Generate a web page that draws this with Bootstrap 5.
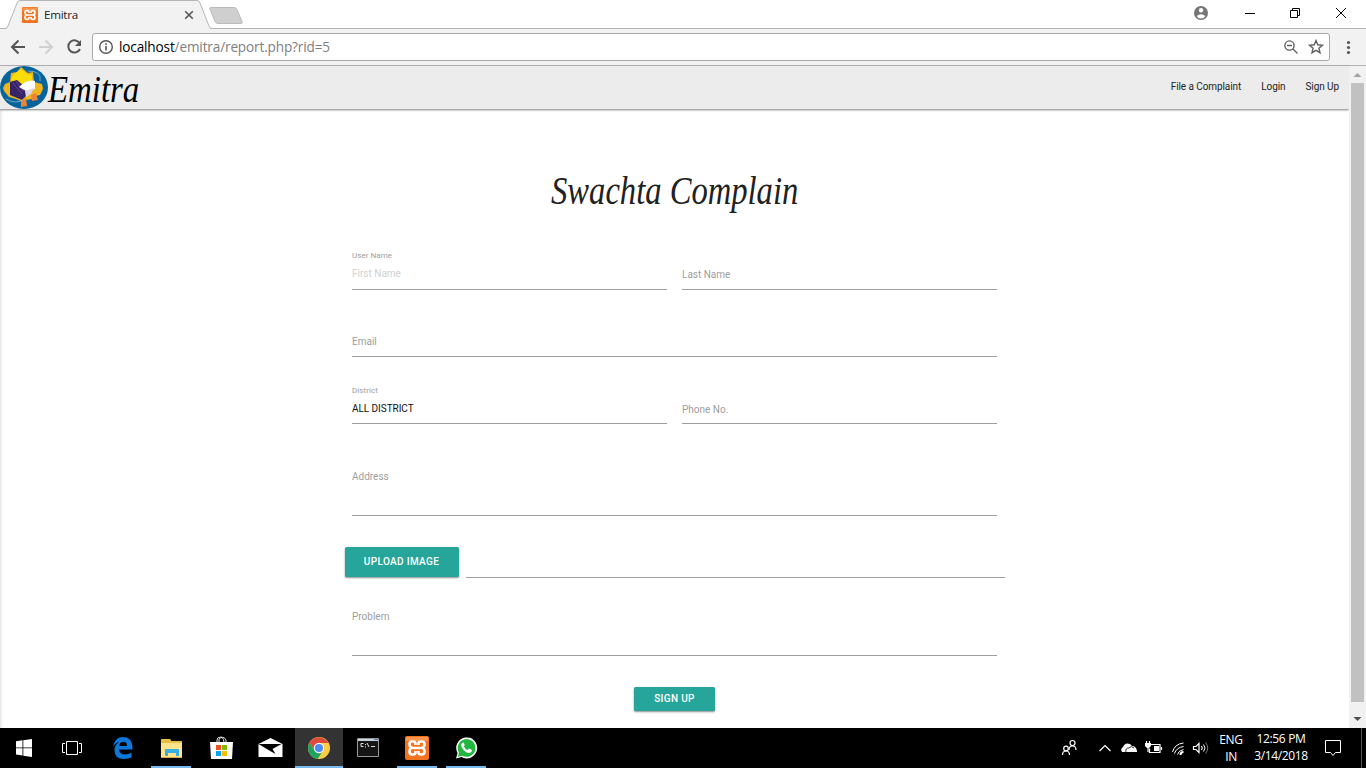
<!DOCTYPE html>
<html lang="en">
<head>
<meta charset="utf-8">
<meta name="viewport" content="width=device-width, initial-scale=1">
<title>Emitra</title>
<link href="https://cdn.jsdelivr.net/npm/bootstrap@5.3.0/dist/css/bootstrap.min.css" rel="stylesheet">
<style>
body{height:768px;overflow:hidden;font-family:Roboto,"Liberation Sans",sans-serif;background:#fff;color:#212121}
svg{display:block;flex:none}
.ui{font-family:"Open Sans","Noto Sans",sans-serif}
.tabstrip{height:28px;background:#fff}
.tab-face{width:212px;height:29px;z-index:2}
.tab-title{font-size:11.6px;line-height:16px;color:#222;letter-spacing:-.25px}
.toolbar{height:38px;background:#f2f2f2;border-top:1px solid #b5b5b5;border-bottom:1px solid #b5b5b5}
.omnibox{height:28px;width:1238px;border:1px solid #a9a9a9;border-radius:3px;background:#fff;font-size:13.6px;letter-spacing:-.15px;line-height:26px;color:#808080}
.viewport-area{height:662px}
.site{width:1349px;box-shadow:inset 3px 0 3px -2px #ddd}
.site-nav{height:43px;background:#ececec;box-shadow:0 1px 2px rgba(0,0,0,.5);font-size:10px;color:#222}
.script-face{font-family:"Liberation Serif",serif;font-style:italic;white-space:nowrap}
.brand-name{font-size:38px;line-height:46px;color:#000;width:92px;transform:scaleX(.865);transform-origin:left}
.nav-links{gap:20px;padding-right:10px;line-height:14px;padding-top:14px;letter-spacing:-.08px}
.headline{height:114px;padding-top:58px;font-size:40px;line-height:48px;color:#212121;font-weight:400}
.headline span{display:inline-block;transform:scaleX(.815)}
.complaint{width:660px;margin:0 auto;font-size:10px;color:#9e9e9e}
.complaint .row{--bs-gutter-x:15px;margin:0}
.field{height:67px;border-bottom:1px solid #9e9e9e;line-height:14px;padding-top:45px;letter-spacing:0}
.field.stacked{padding-top:26px}
.tiny{font-size:8px;line-height:14px;letter-spacing:.05px}
.entry{margin-top:4px}
.ghost{color:#d1d1d1}
.chosen{color:#111;letter-spacing:-.05px}
.field.lower{padding-top:46px}
.field.stacked.lower{padding-top:27px}
.tall{height:92px}
.field.problem{height:78px;padding-top:32px}
.upload{height:62px}
.btn-teal{--bs-btn-bg:#26a69a;--bs-btn-color:#fff;--bs-btn-hover-bg:#2bbbad;--bs-btn-hover-color:#fff;border:0;border-radius:1.5px;padding:0 0 1px;font-size:10px;font-weight:500;letter-spacing:.35px;box-shadow:0 1px 2px rgba(0,0,0,.45)}
.btn-upload{width:114px;height:30px;margin-bottom:1px}
.upload-line{border-bottom:1px solid #9e9e9e;margin-left:7px}
.btn-send{width:81px;height:24px;margin-top:31px}
.scroller{width:17px;background:#f1f1f1}
.thumb{width:13px;height:619px;background:#c1c1c1}
.arrow{height:17px}
.taskbar{height:40px;background:#000;color:#fff}
.task{width:48px;height:40px;margin-right:1.15px}
.task.running{background:linear-gradient(#76b9ed,#76b9ed) center bottom/40px 2px no-repeat}
.task.current{background:linear-gradient(#76b9ed,#76b9ed) center bottom/48px 2px no-repeat,#333}
.tray{font-size:12px;line-height:17px;letter-spacing:-.35px}
</style>
</head>
<body class="d-flex flex-column">
<svg width="0" height="0" class="position-absolute"><defs>
<g id="xampp"><rect width="24" height="24" rx="2" fill="#f3731e"/><path d="M1 1h22v4H1z" fill="#f9954c"/><path d="M10.500 9V7.500Q10.500 5.500 8 5.500H7Q4.500 5.500 4.500 8.200T7 11.800Q4.500 12.500 4.500 15.500T7 18.500H8Q10.500 18.500 10.500 16.500V15M13.500 9V7.500Q13.500 5.500 16 5.500H17Q19.500 5.500 19.500 8.200T17 11.800Q19.500 12.500 19.500 15.500T17 18.500H16Q13.500 18.500 13.500 16.500V15M8.500 12h7" fill="none" stroke="#fff" stroke-width="2.600"/></g>
</defs></svg>

<header class="ui">
  <div class="tabstrip d-flex">
    <div class="tab-face position-relative d-flex">
      <svg class="position-absolute top-0 start-0" width="244" height="29"><path d="M0 28.5H5.500Q7 28.500 8 26L17 3Q18 .5 20 .5H197Q199 .5 200 3L209 26Q210 28.500 212 28.500" fill="#f2f2f2" stroke="#b5b5b5"/><path d="M7 28.500H210" stroke="#f2f2f2"/><path d="M211 7.500H234Q236 7.500 237 9.500L242 21.500Q243 23.500 241 23.500H218Q216 23.500 215 21.500L210 9.500Q209 7.500 211 7.500Z" fill="#cfcfcf" stroke="#bbb"/></svg>
      <div class="position-relative d-flex align-items-start w-100">
        <svg width="16" height="16" viewBox="0 0 24 24" style="margin:7px 6px 0 22px"><use href="#xampp"/></svg>
        <span class="tab-title" style="margin-top:7px">Emitra</span>
        <svg width="10" height="10" style="margin:10px 18px 0 auto"><path d="M1.200 1.200l7.600 7.600M8.800 1.200L1.200 8.800" stroke="#555" stroke-width="1.600"/></svg>
      </div>
    </div>
    <div class="ms-auto d-flex align-items-start">
      <svg width="172" height="28" viewBox="1194 0 172 28" fill="none"><circle cx="1201" cy="13" r="7" fill="#757575"/><circle cx="1201" cy="10.200" r="2.200" fill="#fff"/><path d="M1196.600 16q4.400-3.700 8.800 0-1.500 2.600-4.400 2.600t-4.400-2.600" fill="#fff"/><path d="M1245 13.500h10M1290.500 10.500h7v7h-7zM1292.500 10.500v-2h7v7h-2M1336 8l10 10M1346 8l-10 10" stroke="#000"/></svg>
    </div>
  </div>
  <div class="toolbar d-flex align-items-center">
    <svg width="92" height="36" viewBox="0 29 92 36" fill="none" stroke="#555" stroke-width="2"><path d="M25 47H12.500M18.500 40.500L12 47l6.500 6.500"/><path d="M39 47h12.500M45.500 40.500L52 47l-6.500 6.500" stroke="#d0d0d0"/><path d="M79.800 43.500A6.100 6.100 0 1 0 80 49"/><path d="M81 40v6h-6z" fill="#555" stroke="none"/></svg>
    <div class="omnibox d-flex align-items-center">
      <svg width="14" height="14" class="flex-shrink-0" style="margin:0 6px" fill="none" stroke="#555"><circle cx="7" cy="7" r="6.300" stroke-width="1.400"/><path d="M7 6v4.500M7 3.300v1.600" stroke-width="1.600"/></svg>
      <span><span class="text-black">localhost</span>/emitra/report.php?rid=5</span>
      <svg class="ms-auto" width="46" height="26" viewBox="1283 34 46 26" fill="none" stroke="#606060" stroke-width="1.400"><circle cx="1289.500" cy="45.500" r="4.600"/><path d="M1287 45.500h5M1293 49l4.500 4.500"/><path d="M1316 40.500l1.800 4.300 4.600.4-3.500 3 1.100 4.500-4-2.400-4 2.400 1.100-4.500-3.500-3 4.600-.4z"/></svg>
    </div>
    <svg width="36" height="36" fill="#555"><circle cx="18.500" cy="13.500" r="1.600"/><circle cx="18.500" cy="18.500" r="1.600"/><circle cx="18.500" cy="23.500" r="1.600"/></svg>
  </div>
</header>

<main class="viewport-area d-flex">
  <div class="site">
    <nav class="site-nav d-flex">
      <svg width="48" height="43" viewBox="0 0 48 43"><ellipse cx="24" cy="21.500" rx="24" ry="21.500" fill="#07639b"/><path d="M3 22l2-4 5-2 1-9 6-1 4-5 7 6 5-1 1 10 8 2 1 5-3 6-5 1-3 3-6 1-3 2-7-3-7-2-5-6z" fill="#efb51c"/><path d="M13 9l8-6 6 5 5 1v7l-7 5-14-7z" fill="#fadd08"/><path d="M21 34l5-2 1 8-6 1zM31 29l5-2 2 7-6 1z" fill="#ee8433"/><path d="M10 16l7-2 7 6 3 9-5 5-12-5z" fill="#352466"/><path d="M13 17l9 11M16 15l7 10" stroke="#694785"/><path d="M19 21q8-8 16-6v8l-9 2z" fill="#fff"/><path d="M25 25l9-3-3 6-5 3z" fill="#ddd7e9"/><path d="M28 5q14 0 12 10M6 33q10 6 18 0" fill="none" stroke="#9cc4dc" stroke-width=".7"/></svg>
      <div class="brand-name script-face">Emitra</div>
      <div class="nav-links d-flex ms-auto"><span>File a Complaint</span><span>Login</span><span>Sign Up</span></div>
    </nav>
    <h1 class="headline script-face text-center m-0"><span>Swachta Complain</span></h1>
    <form class="complaint">
      <div class="row">
        <div class="col-6"><div class="field stacked"><div class="tiny">User Name</div><div class="entry ghost">First Name</div></div></div>
        <div class="col-6"><div class="field">Last Name</div></div>
      </div>
      <div class="row"><div class="col-12"><div class="field">Email</div></div></div>
      <div class="row">
        <div class="col-6"><div class="field stacked lower"><div class="tiny">District</div><div class="entry chosen">ALL DISTRICT</div></div></div>
        <div class="col-6"><div class="field lower">Phone No.</div></div>
      </div>
      <div class="row"><div class="col-12"><div class="field tall lower">Address</div></div></div>
      <div class="upload d-flex align-items-end"><button type="button" class="btn btn-teal btn-upload">UPLOAD IMAGE</button><div class="upload-line flex-grow-1"></div></div>
      <div class="row"><div class="col-12"><div class="field problem">Problem</div></div></div>
      <div class="d-flex justify-content-center"><button type="button" class="btn btn-teal btn-send">SIGN UP</button></div>
    </form>
  </div>
  <div class="scroller d-flex flex-column align-items-center">
    <svg class="arrow" width="17"><path d="M4.500 11h8L8.500 7z" fill="#a3a3a3"/></svg>
    <div class="thumb"></div>
    <svg class="arrow mt-auto" width="17"><path d="M4.500 6h8L8.500 10z" fill="#505050"/></svg>
  </div>
</main>

<footer class="taskbar ui d-flex">
  <div class="task"><svg width="48" height="40" fill="#fff"><path d="M16 13.300l6.500-1v7.200H16zM23.300 12.200L32 11v8.500h-8.700zM16 20.300h6.500v7.200l-6.500-1zM23.300 20.300H32V29l-8.700-1.300z"/></svg></div>
  <div class="task"><svg width="48" height="40" fill="none" stroke="#fff"><path d="M17.500 13.500h11v13h-11zM16 15.500h-2.500v9H16M30 15.500h2.500v9H30"/></svg></div>
  <div class="task"><svg width="48" height="40" viewBox="98.500 728 48 40"><path d="M113.500 746.800Q115.500 737 123.500 737q9.800 0 9.500 12.500h-13.500q.6 5 6 5 3.700 0 6.500-2v4.800q-3 1.600-7.600 1.600-9.400 0-9.400-9 0-5 4.500-8-3.500.6-6 4.900m6.300-.8h7.700q0-4.300-3.700-4.300-3.400 0-4 4.300" fill="#0b78dc"/></svg></div>
  <div class="task running"><svg width="48" height="40" viewBox="147 728 48 40"><path d="M161 739h9l1 2h11v16h-21z" fill="#ffe28c"/><path d="M161 739h9l1 2h11v2h-21z" fill="#e9bd43"/><path d="M165 756v-7h14v7h-3v-3h-8v3z" fill="#36b0e4"/><path d="M161 757v1h21v-1z" fill="#d9ad45"/></svg></div>
  <div class="task"><svg width="48" height="40" viewBox="196 728 48 40"><path d="M216 743v-3q0-3 4-3t5 3v3M218 743v-4q4-4 5 3" fill="none" stroke="#ddd"/><path d="M209 742h23l-1 17h-21z" fill="#fff"/><path d="M215 745h5v5h-5z" fill="#f25022"/><path d="M221 745h5v5h-5z" fill="#7fba00"/><path d="M215 751h5v5h-5z" fill="#00a4ef"/><path d="M221 751h5v5h-5z" fill="#ffb900"/></svg></div>
  <div class="task"><svg width="48" height="40" viewBox="245.500 728 48 40"><path d="M258 744l12-6 12 6v13h-24z" fill="#fff"/><path d="M258 744h23l-9 5 3 5-7-4z" fill="#000"/></svg></div>
  <div class="task current"><svg width="48" height="40" viewBox="295 728 48 40"><circle cx="319" cy="748" r="11" fill="#ffcd41"/><path d="M309.500 742.500A11 11 0 0 0 317.500 758.900L323.300 750.500H314.700z" fill="#1da462"/><path d="M319 743h9.500a11 11 0 0 0-19-.5l5.200 8z" fill="#de4b3e"/><circle cx="319" cy="748" r="5.200" fill="#fff"/><circle cx="319" cy="748" r="4.100" fill="#4c8bf5"/></svg></div>
  <div class="task"><svg width="48" height="40" viewBox="343 728 48 40"><path d="M356.500 738.500h21v18h-21z" fill="#151515" stroke="#999"/><path d="M357 739h20v2h-20z" fill="#cbd4df"/><path d="M373 739.500h4" stroke="#557bb0"/><path d="M362.500 743.500h-2.500v3h2.500M364.500 744v1m0 1.500v1M366 743l2 4M370 746.500h4" fill="none" stroke="#ddd"/></svg></div>
  <div class="task running"><svg width="48" height="40" viewBox="-12 -8 48 40"><use href="#xampp"/></svg></div>
  <div class="task running"><svg width="48" height="40" viewBox="442 728 48 40"><path d="M456 758.500l1.600-5.400A10.500 10.500 0 1 1 461.500 757z" fill="#fff"/><path d="M457.800 756.800l1.200-4.200A8.900 8.900 0 1 1 462.200 755.700z" fill="#22b83f"/><path d="M462 743q-2 2 .5 5.500 3.300 4.600 7 4.500 2.500-.5 2.500-3l-3-1.500-1.500 1.500q-2.500-1-3.700-3.700l1-1.300-1.300-2.500z" fill="#fff"/></svg></div>
  <div class="d-flex ms-auto tray">
    <svg width="160" height="40" viewBox="1055 728 160 40" fill="none" stroke="#fff" stroke-width="1.200"><circle cx="1072.500" cy="743" r="2.500"/><path d="M1069 750q0-4 3.500-4t3.500 4"/><circle cx="1066" cy="748.500" r="2.300"/><path d="M1062.500 755q0-4 3.500-4t3.500 4M1099.500 751l5.500-5.500 5.500 5.500"/><path d="M1122 752q-2-3 1-5 2-5 7-3l2 2q4 0 5 5v1z" fill="#fff" stroke="none"/><path d="M1126 752q-1-4 3-4 2-3 5 0" stroke="#000" stroke-width=".8"/><path d="M1149.500 744.500h10.500v8h-10.500v-4"/><path d="M1154 746h5v5h-5z" fill="#fff" stroke="none"/><path d="M1161.500 747v3M1146.500 741v2.500M1149.500 741v2.500"/><path d="M1145 743h6v3l-2 2h-2l-2-2z" fill="#fff" stroke="none"/><path d="M1148 748v4"/><g stroke-width="1"><path d="M1172.500 752q2-8 11-9M1174.500 753.500q2-6 9-7M1177.500 754.500q1-4 6-5" /><path d="M1180.500 755q0-3 3-3" stroke-width="2"/></g><path d="M1193.500 746.500h2.500l3-3v9l-3-3h-2.500zM1201.500 746q1.500 2 0 4"/><path d="M1203.500 744.500q3 3.500 0 7" stroke-width="1"/><path d="M1205.500 742.500q4.500 5.500 0 11" stroke="#777" stroke-width="1"/></svg>
    <div class="text-center" style="width:32px;padding-top:3px">ENG<br>IN</div>
    <div class="text-center" style="width:68px;padding-top:2px">12:56 PM<br>3/14/2018</div>
    <svg width="51" height="40" viewBox="1315 728 51 40" fill="none" stroke="#fff"><path d="M1325.500 740.500h15v12h-5l-2.500 3-2.500-3h-5z"/><path d="M1361.500 728v40" stroke="#555"/></svg>
  </div>
</footer>
<script src="https://cdn.jsdelivr.net/npm/bootstrap@5.3.0/dist/js/bootstrap.bundle.min.js"></script>
</body>
</html>
